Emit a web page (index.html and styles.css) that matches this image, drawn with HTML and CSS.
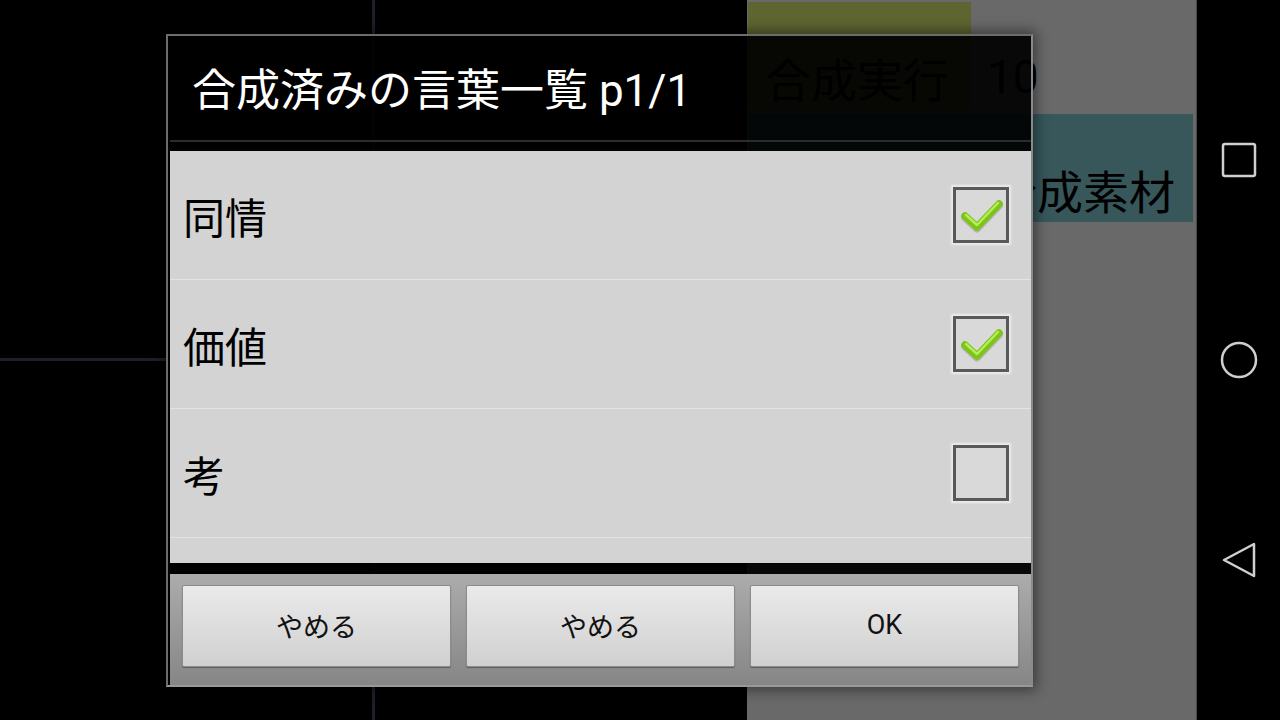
FILE: index.html
```html
<!DOCTYPE html>
<html lang="ja">
<head>
    <meta charset="UTF-8">
    <title>合成済みの言葉一覧</title>
    <link rel="stylesheet" href="styles.css">
</head>
<body>
<div class="screen">
    <div class="app">
        <!-- 左側：盤面 -->
        <div class="board">
            <div class="cell"></div>
            <div class="cell"></div>
            <div class="cell"></div>
            <div class="cell"></div>
        </div>
        <!-- 右側：操作パネル -->
        <div class="panel">
            <div class="panel-top">
                <div class="btn-run">合成実行</div>
                <div class="count">10</div>
            </div>
            <div class="btn-material">合成素材</div>
        </div>

        <!-- ダイアログ -->
        <div class="dialog">
            <div class="dlg-title">合成済みの言葉一覧 p1/1</div>
            <div class="dlg-line"></div>
            <ul class="list">
                <li>
                    <span class="word">同情</span>
                    <span class="check on">
                        <svg width="50" height="50" viewBox="0 0 50 50">
                            <polyline points="9,26 21,37 43,14" fill="none" stroke="#8a8a8a" stroke-width="8" stroke-linecap="round" stroke-linejoin="round" opacity=".45" transform="translate(0,1.5)"/>
                            <polyline points="9,26 21,37 43,14" fill="none" stroke="#7cc417" stroke-width="7.5" stroke-linecap="round" stroke-linejoin="round"/>
                            <polyline points="10,25 21,35 42,13" fill="none" stroke="#b6ec5a" stroke-width="2.5" stroke-linecap="round" stroke-linejoin="round"/>
                        </svg>
                    </span>
                </li>
                <li>
                    <span class="word">価値</span>
                    <span class="check on">
                        <svg width="50" height="50" viewBox="0 0 50 50">
                            <polyline points="9,26 21,37 43,14" fill="none" stroke="#8a8a8a" stroke-width="8" stroke-linecap="round" stroke-linejoin="round" opacity=".45" transform="translate(0,1.5)"/>
                            <polyline points="9,26 21,37 43,14" fill="none" stroke="#7cc417" stroke-width="7.5" stroke-linecap="round" stroke-linejoin="round"/>
                            <polyline points="10,25 21,35 42,13" fill="none" stroke="#b6ec5a" stroke-width="2.5" stroke-linecap="round" stroke-linejoin="round"/>
                        </svg>
                    </span>
                </li>
                <li>
                    <span class="word">考</span>
                    <span class="check"></span>
                </li>
            </ul>
            <div class="dlg-gap"></div>
            <div class="btns">
                <a href="javascript:;" class="btn">やめる</a>
                <a href="javascript:;" class="btn">やめる</a>
                <a href="javascript:;" class="btn">OK</a>
            </div>
        </div>
    </div>

    <!-- ナビゲーションバー -->
    <div class="nav">
        <svg width="40" height="40" viewBox="0 0 40 40">
            <rect x="4" y="4" width="32" height="32" rx="2" fill="none" stroke="#cfcfcf" stroke-width="2.5"/>
        </svg>
        <svg width="40" height="40" viewBox="0 0 40 40">
            <circle cx="20" cy="20" r="17" fill="none" stroke="#cfcfcf" stroke-width="2.5"/>
        </svg>
        <svg width="40" height="40" viewBox="0 0 40 40">
            <path d="M35 4 L35 36 L5 20 Z" fill="none" stroke="#cfcfcf" stroke-width="2.5" stroke-linejoin="round"/>
        </svg>
    </div>
</div>
</body>
</html>
```

FILE: styles.css
```css
html,body{
    height: 100%;
}
*{
    margin:0;
    padding:0;
    list-style: none;
    box-sizing: border-box;
}
a{
    text-decoration: none;
    color: inherit;
}
body{
    background: #000;
    font-family: Roboto, "Noto Sans CJK JP", sans-serif;
    overflow: hidden;
}
.screen{
    width: 1280px;
    height: 720px;
    display: flex;
}
.app{
    width: 1196px;
    height: 720px;
    display: flex;
    position: relative;
}
/* 盤面 */
.board{
    width: 747px;
    height: 720px;
    display: grid;
    grid-template-columns: 372px 372px;
    grid-template-rows: 358px 359px;
    gap: 3px;
    background: #1d2029;
}
.board .cell{
    background: #000;
}
/* 右パネル */
.panel{
    flex: 1;
    background: #696969;
    padding: 2px 0 0 1px;
    color: #000;
}
.panel-top{
    display: flex;
    gap: 16px;
    height: 108px;
}
.btn-run{
    width: 223px;
    background: #5f6531;
    font-size: 46px;
    padding: 42px 0 0 17px;
    display: flex;
    align-items: center;
}
.count{
    font-size: 46px;
    padding-top: 42px;
    display: flex;
    align-items: center;
}
.btn-material{
    margin-top: 4px;
    width: 445px;
    height: 108px;
    background: #37575b;
    font-size: 46px;
    display: flex;
    align-items: center;
    justify-content: flex-end;
    padding: 42px 18px 0 0;
}
/* ダイアログ */
.dialog{
    position: absolute;
    left: 166px;
    top: 34px;
    width: 867px;
    height: 653px;
    border: 2px solid #6c6c6c;
    border-right-color: #8a8a8a;
    border-bottom-color: #999;
    padding-left: 2px;
    background: rgba(0,0,0,.92);
    box-shadow: 0 0 12px 3px rgba(0,0,0,.45);
    display: flex;
    flex-direction: column;
}
.dlg-title{
    height: 104px;
    color: #fff;
    font-size: 44px;
    line-height: 104px;
    padding-left: 22px;
    padding-top: 3px;
}
.dlg-line{
    height: 2px;
    background: #2c2c2c;
    margin-bottom: 9px;
}
.list{
    height: 412px;
    background: #d3d3d3;
}
.list li{
    height: 129px;
    border-bottom: 1px solid #e3e3e3;
    display: flex;
    align-items: center;
    justify-content: space-between;
    padding: 0 22px 0 13px;
}
.list .word{
    font-size: 42px;
    color: #000;
}
.check{
    width: 56px;
    height: 56px;
    border: 3px solid #595959;
    background: #d9d9d9;
    box-shadow: 0 0 2px 2px #ececec;
    display: flex;
    align-items: center;
    justify-content: center;
}
.dlg-gap{
    height: 11px;
}
.btns{
    flex: 1;
    background: linear-gradient(#acacac, #868686);
    display: flex;
    gap: 15px;
    padding: 11px 12px 0 12px;
}
.btn{
    flex: 1;
    height: 82px;
    background: linear-gradient(#eaeaea, #d0d0d0);
    border: 1px solid #8c8c8c;
    border-radius: 2px;
    box-shadow: 0 1px 1px rgba(0,0,0,.35);
    font-size: 27px;
    color: #111;
    display: flex;
    align-items: center;
    justify-content: center;
    padding-bottom: 2px;
}
/* ナビゲーションバー */
.nav{
    width: 84px;
    height: 720px;
    background: #000;
    border-left: 1px solid #4a4a4a;
    display: flex;
    flex-direction: column;
    align-items: center;
    gap: 160px;
    padding-top: 140px;
}
```
